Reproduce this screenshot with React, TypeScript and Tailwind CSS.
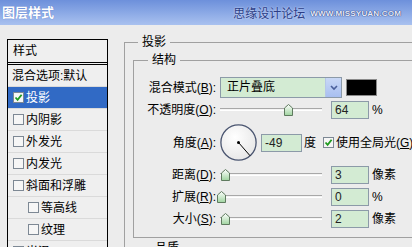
import React from "react";

const FONT = { fontFamily: '"Liberation Sans", "Noto Sans CJK SC", sans-serif' };

function Check({ checked }: { checked?: boolean }) {
  return (
    <span className="w-[11px] h-[11px] shrink-0 border border-[#7d8894] bg-[#f6f6f6] flex items-center justify-center">
      {checked && (
        <svg width="9" height="9" viewBox="0 0 9 9">
          <path d="M1.5 4.5 L3.6 6.8 L7.6 1.8" stroke="#1f9a1f" strokeWidth="1.8" fill="none" />
        </svg>
      )}
    </span>
  );
}

function Thumb() {
  return (
    <svg width="9" height="12" viewBox="0 0 9 12">
      <defs>
        <linearGradient id="tg" x1="0" y1="0" x2="0" y2="1">
          <stop offset="0" stopColor="#ffffff" />
          <stop offset="1" stopColor="#9fd49f" />
        </linearGradient>
      </defs>
      <path d="M4.5 0.5 L8.5 4 L8.5 11.5 L0.5 11.5 L0.5 4 Z" fill="url(#tg)" stroke="#5f7a5f" strokeWidth="1" />
    </svg>
  );
}

function Slider({ pos }: { pos: number }) {
  return (
    <div className="relative w-[102px] h-[14px] shrink-0">
      <div className="absolute left-0 right-0 top-[5px] h-[3px] border-t border-[#a8a8a8] border-b border-b-white bg-[#f4f4f4]" />
      <div className="absolute top-[1px]" style={{ left: pos }}>
        <Thumb />
      </div>
    </div>
  );
}

function Field({ value, w = 38 }: { value: string; w?: number }) {
  return (
    <div
      className="h-[18px] border border-[#8c9aa8] bg-[#d3ebd3] text-[12px] leading-[16px] pl-[3px] text-[#222] shrink-0"
      style={{ width: w }}
    >
      {value}
    </div>
  );
}

function Label({ text, k }: { text: string; k: string }) {
  return (
    <div className="w-[82px] shrink-0 text-right text-[12px] whitespace-nowrap text-black">
      {text}(<u>{k}</u>):
    </div>
  );
}

function SliderRow({ text, k, value, unit, pos }: { text: string; k: string; value: string; unit: string; pos: number }) {
  return (
    <div className="flex items-center h-[22px]">
      <Label text={text} k={k} />
      <div className="ml-[4px]">
        <Slider pos={pos} />
      </div>
      <div className="ml-[9px]">
        <Field value={value} />
      </div>
      <span className="ml-[3px] text-[12px] whitespace-nowrap">{unit}</span>
    </div>
  );
}

const items: { t: string; indent?: boolean; checked?: boolean; sel?: boolean; nobox?: boolean }[] = [
  { t: "混合选项:默认", nobox: true },
  { t: "投影", checked: true, sel: true },
  { t: "内阴影" },
  { t: "外发光" },
  { t: "内发光" },
  { t: "斜面和浮雕" },
  { t: "等高线", indent: true },
  { t: "纹理", indent: true },
  { t: "光泽" },
];

export default function App() {
  return (
    <div className="w-[412px] h-[247px] overflow-hidden bg-[#ececec] flex flex-col" style={FONT}>
      <div className="h-[25px] shrink-0 flex items-center justify-between bg-gradient-to-b from-[#6d90db] to-[#a9c1ef] pl-[2px] pr-[11px]">
        <span className="text-white font-bold text-[13px] leading-[14px] [text-shadow:0_0_1px_#4c6fc0]">图层样式</span>
        <div className="flex items-center gap-[5px] pt-[2px]">
          <span className="text-[12px] text-[#2b3d86] [text-shadow:0_0_2px_#e6ecff]">思缘设计论坛</span>
          <span className="text-[8px] font-bold tracking-[0.2px] text-[#e8edfb] [text-shadow:0_0_1px_#1e2f74,0_0_1px_#1e2f74]">
            WWW.MISSYUAN.COM
          </span>
        </div>
      </div>
      <div className="flex items-start flex-1 min-h-0">
        <div className="ml-[7px] mt-[14px] w-[101px] h-[240px] shrink-0 border border-black bg-[#efefef] flex flex-col text-[12px]">
          <div className="h-[25px] shrink-0 pl-[5px] flex items-center border-b-[3px] border-double border-black">样式</div>
          {items.map((it) => (
            <div
              key={it.t}
              className={
                "h-[22px] shrink-0 flex items-center gap-[2px] border-b border-[#dadada] whitespace-nowrap " +
                (it.indent ? "pl-[20px] " : "pl-[5px] ") +
                (it.sel ? "bg-[#316ac5] text-white" : "text-black")
              }
            >
              {!it.nobox && <Check checked={it.checked} />}
              <span className={it.nobox ? "-ml-[1px]" : ""}>{it.t}</span>
            </div>
          ))}
        </div>

        <fieldset className="ml-[16px] mt-[10px] w-[320px] shrink-0 border-t border-l border-[#a0a0a0] p-0 m-0">
          <legend className="ml-[13px] px-[4px] text-[12px] leading-[14px]">投影</legend>
          <fieldset className="ml-[8px] mt-[4px] w-[320px] border-t border-l border-b border-[#a0a0a0] pt-[10px] pb-[7px]">
            <legend className="ml-[14px] px-[4px] text-[12px] leading-[14px]">结构</legend>

            <div className="flex items-center h-[21px]">
              <Label text="混合模式" k="B" />
              <div className="ml-[4px] w-[122px] h-[21px] border border-[#8c9aa8] bg-[#d3ebd3] flex shrink-0">
                <span className="flex-1 pl-[6px] text-[12px] leading-[19px]">正片叠底</span>
                <span className="w-[16px] h-full bg-gradient-to-b from-[#c9d8f6] to-[#a8bff0] border-l border-[#b5c6e8] flex items-center justify-center">
                  <svg width="8" height="6" viewBox="0 0 8 6">
                    <path d="M1 1 L4 4 L7 1" stroke="#4a5f9a" strokeWidth="1.6" fill="none" />
                  </svg>
                </span>
              </div>
              <div className="ml-[4px] w-[31px] h-[17px] bg-black border border-[#8a8a8a] shrink-0" />
            </div>

            <div className="flex items-center h-[20px] mt-[2px]">
              <Label text="不透明度" k="O" />
              <div className="ml-[4px]">
                <Slider pos={64} />
              </div>
              <div className="ml-[9px]">
                <Field value="64" />
              </div>
              <span className="ml-[3px] text-[12px]">%</span>
            </div>

            <div className="flex items-center h-[41px] mt-[2px]">
              <Label text="角度" k="A" />
              <svg className="ml-[4px] shrink-0" width="37" height="39" viewBox="0 0 37 39">
                <defs>
                  <radialGradient id="cg" cx="0.4" cy="0.35" r="0.7">
                    <stop offset="0" stopColor="#ffffff" />
                    <stop offset="1" stopColor="#e6e6e6" />
                  </radialGradient>
                </defs>
                <circle cx="18.5" cy="19.5" r="17.6" fill="url(#cg)" stroke="#4a5570" strokeWidth="1.3" />
                <circle cx="18.5" cy="19.5" r="1.5" fill="#000" />
                <line x1="18.5" y1="19.5" x2="30" y2="32.7" stroke="#000" strokeWidth="1" />
              </svg>
              <div className="ml-[4px]">
                <Field value="-49" w={41} />
              </div>
              <span className="ml-[2px] text-[12px]">度</span>
              <span className="ml-[7px]">
                <Check checked />
              </span>
              <span className="ml-[2px] text-[12px] whitespace-nowrap">
                使用全局光(<u>G</u>)
              </span>
            </div>

            <div className="mt-[1px]">
              <SliderRow text="距离" k="D" value="3" unit="像素" pos={1} />
              <SliderRow text="扩展" k="R" value="0" unit="%" pos={-3} />
              <SliderRow text="大小" k="S" value="2" unit="像素" pos={1} />
            </div>
          </fieldset>
          <fieldset className="ml-[8px] mt-[3px] w-[320px] border-t border-l border-[#a0a0a0] h-[20px]">
            <legend className="ml-[17px] px-[4px] text-[12px] leading-[14px]">品质</legend>
          </fieldset>
        </fieldset>
      </div>
    </div>
  );
}
